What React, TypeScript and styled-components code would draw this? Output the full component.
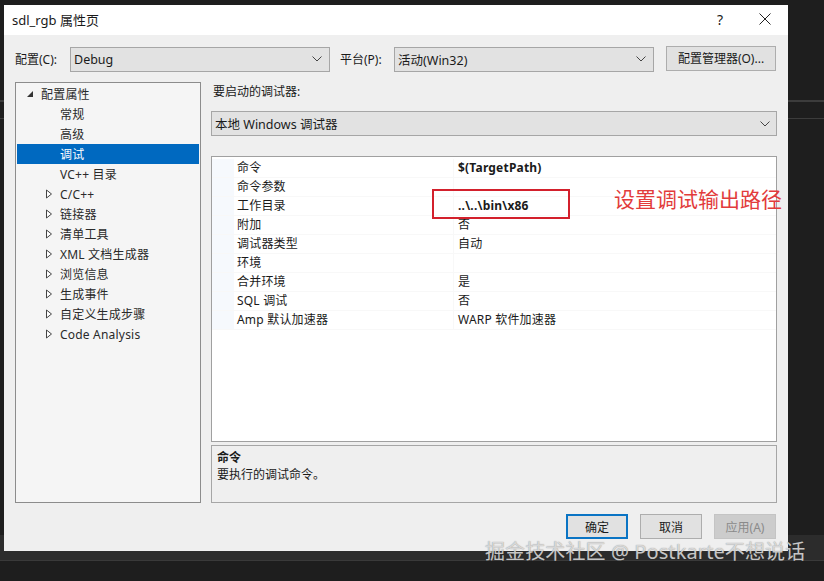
import React from "react";
import styled, { createGlobalStyle } from "styled-components";

const GlobalStyle = createGlobalStyle`
  html, body {
    margin: 0;
    padding: 0;
    background: #1e1e1e;
  }
  body {
    font-family: "Noto Sans", "Noto Sans CJK SC", sans-serif;
    font-size: 12px;
    color: #1a1a1a;
  }
`;

const Page = styled.div`
  position: relative;
  width: 824px;
  height: 581px;
  overflow: hidden;
  padding: 5px 36px 30px 4px;
  box-sizing: border-box;
  background:
    linear-gradient(#3c3c3c, #3c3c3c) 0 100px / 100% 2px no-repeat,
    linear-gradient(#3c3c3c, #3c3c3c) 0 118px / 100% 1px no-repeat,
    linear-gradient(#2c2c2c, #2c2c2c) 0 535px / 100% 25px no-repeat,
    linear-gradient(#3a3a3a, #3a3a3a) 0 560px / 100% 1px no-repeat,
    #1e1e1e;
`;

const Dialog = styled.div`
  width: 784px;
  height: 546px;
  background: #efefef;
  display: flex;
  flex-direction: column;
`;

const TitleBar = styled.div`
  height: 30px;
  flex: none;
  background: #fff;
  display: flex;
  align-items: center;
  padding: 0 17px 0 8px;
  font-size: 13px;
`;

const Title = styled.div`
  flex: 1;
  margin-top: -1px;
`;

const HelpMark = styled.div`
  width: 18px;
  margin-right: 30px;
  text-align: center;
  font-size: 14px;
  margin-top: -2px;
`;

const CloseIcon = styled.svg`
  display: block;
  width: 12px;
  height: 12px;
  margin-top: -2px;
`;

const Body = styled.div`
  flex: 1;
  display: flex;
  flex-direction: column;
  padding: 11px 11px 12px 11px;
  min-height: 0;
`;

const ConfigRow = styled.div`
  height: 26px;
  display: flex;
  align-items: center;
`;

const FieldLabel = styled.div<{ $width: number }>`
  width: ${(p) => p.$width}px;
  flex: none;
`;

const SelectBox = styled.div<{ $width?: number }>`
  ${(p) => (p.$width ? `width: ${p.$width}px;` : "")}
  height: 25px;
  flex: none;
  box-sizing: border-box;
  border: 1px solid #a6a6a6;
  background: #e2e2e2;
  display: flex;
  align-items: center;
  justify-content: space-between;
  padding: 0 7px 0 3px;
  font-size: 12.5px;
`;

const Chevron = styled.svg`
  width: 10px;
  height: 6px;
  display: block;
`;

const PlatformLabel = styled(FieldLabel)`
  margin-left: 10px;
`;

const ManagerButton = styled.button`
  width: 110px;
  height: 25px;
  margin: -2px 0 0 12px;
  flex: none;
  font: inherit;
  color: inherit;
  padding: 0;
  border: 1px solid #adadad;
  background: #e1e1e1;
`;

const Columns = styled.div`
  flex: 1;
  display: flex;
  gap: 10px;
  margin-top: 10px;
  min-height: 0;
`;

const TreePanel = styled.div`
  width: 186px;
  flex: none;
  box-sizing: border-box;
  border: 1px solid #8c8c8c;
  background: #f5f5f5;
  padding: 1px 1px 0;
`;

const TreeRow = styled.div<{ $selected?: boolean; $depth: number }>`
  height: 20px;
  display: flex;
  align-items: center;
  box-sizing: border-box;
  padding-left: ${(p) => (p.$depth === 0 ? 9 : 28)}px;
  background: ${(p) => (p.$selected ? "#0069c0" : "transparent")};
  color: ${(p) => (p.$selected ? "#fff" : "#2a2a2a")};
`;

const Arrow = styled.svg`
  width: 8px;
  height: 10px;
  flex: none;
  display: block;
`;

const TreeLabel = styled.span<{ $offset: number }>`
  margin-left: ${(p) => p.$offset}px;
  letter-spacing: 0.2px;
`;

const RightColumn = styled.div`
  flex: 1;
  display: flex;
  flex-direction: column;
  min-width: 0;
`;

const DebuggerLabel = styled.div`
  height: 18px;
  line-height: 18px;
  margin-top: 1px;
  margin-bottom: 10px;
  padding-left: 2px;
`;

const DebuggerSelect = styled(SelectBox)`
  padding-right: 6px;
  padding-left: 3px;
`;

const Grid = styled.div`
  position: relative;
  flex: 1;
  margin-top: 20px;
  box-sizing: border-box;
  border: 1px solid #a0a0a0;
  background: #fff;
  padding-top: 2px;
`;

const PropertyRow = styled.div`
  display: grid;
  grid-template-columns: 22px 220px 1fr;
  height: 19px;
  box-sizing: border-box;
  border-bottom: 1px solid #f8f8f8;
  line-height: 18px;
`;

const Gutter = styled.div`
  background: #f6f9fd;
`;

const PropertyName = styled.div`
  padding-left: 3px;
  white-space: nowrap;
  letter-spacing: 0.2px;
  border-right: 1px solid #f8f8f8;
`;

const PropertyValue = styled.div<{ $bold?: boolean }>`
  padding-left: 4px;
  white-space: nowrap;
  letter-spacing: 0.2px;
  font-weight: ${(p) => (p.$bold ? 700 : 400)};
`;

const RedBox = styled.div`
  position: absolute;
  left: 220px;
  top: 32px;
  width: 138px;
  height: 30px;
  box-sizing: border-box;
  border: 2px solid #d3202c;
`;

const RedNote = styled.div`
  position: absolute;
  left: 402px;
  top: 28px;
  font-size: 21px;
  line-height: 28px;
  color: #e23b3b;
  white-space: nowrap;
`;

const Description = styled.div`
  height: 58px;
  flex: none;
  margin-top: 3px;
  box-sizing: border-box;
  border: 1px solid #a6a6a6;
  padding: 3px 5px;
  line-height: 18px;
`;

const DescriptionTitle = styled.div`
  font-weight: 700;
  line-height: 17px;
`;

const ButtonRow = styled.div`
  display: flex;
  justify-content: flex-end;
  gap: 12px;
  margin: 11px 1px 0 0;
`;

const DialogButton = styled.button<{ $primary?: boolean }>`
  width: 62px;
  height: 25px;
  padding: 0;
  font: inherit;
  box-sizing: border-box;
  color: ${(p) => (p.disabled ? "#8a8a8a" : "#1a1a1a")};
  background: ${(p) => (p.disabled ? "#cccccc" : "#e1e1e1")};
  border: ${(p) =>
    p.$primary ? "2px solid #0a74c4" : `1px solid ${p.disabled ? "#c4c4c4" : "#adadad"}`};
`;

const Watermark = styled.div`
  position: absolute;
  left: 485px;
  top: 539px;
  font-size: 20px;
  line-height: 26px;
  letter-spacing: 0.1px;
  color: rgba(232, 232, 232, 0.82);
  white-space: nowrap;
  text-shadow: 0 0 1px rgba(60, 60, 60, 0.6);
`;

const treeItems = [
  { label: "配置属性", depth: 0, arrow: "open" },
  { label: "常规", depth: 1 },
  { label: "高级", depth: 1 },
  { label: "调试", depth: 1, selected: true },
  { label: "VC++ 目录", depth: 1 },
  { label: "C/C++", depth: 1, arrow: "closed" },
  { label: "链接器", depth: 1, arrow: "closed" },
  { label: "清单工具", depth: 1, arrow: "closed" },
  { label: "XML 文档生成器", depth: 1, arrow: "closed" },
  { label: "浏览信息", depth: 1, arrow: "closed" },
  { label: "生成事件", depth: 1, arrow: "closed" },
  { label: "自定义生成步骤", depth: 1, arrow: "closed" },
  { label: "Code Analysis", depth: 1, arrow: "closed" },
];

const properties = [
  { name: "命令", value: "$(TargetPath)", bold: true },
  { name: "命令参数", value: "" },
  { name: "工作目录", value: "..\\..\\bin\\x86", bold: true },
  { name: "附加", value: "否" },
  { name: "调试器类型", value: "自动" },
  { name: "环境", value: "" },
  { name: "合并环境", value: "是" },
  { name: "SQL 调试", value: "否" },
  { name: "Amp 默认加速器", value: "WARP 软件加速器" },
];

const DownChevron = () => (
  <Chevron viewBox="0 0 10 6">
    <path d="M0.5 0.5 L5 5 L9.5 0.5" fill="none" stroke="#444" strokeWidth="1" />
  </Chevron>
);

const App = () => {
  return (
    <Page>
      <GlobalStyle />
      <Dialog>
        <TitleBar>
          <Title>sdl_rgb 属性页</Title>
          <HelpMark>?</HelpMark>
          <CloseIcon viewBox="0 0 12 12">
            <path d="M0.5 0.5 L11.5 11.5 M11.5 0.5 L0.5 11.5" stroke="#222" strokeWidth="1" />
          </CloseIcon>
        </TitleBar>
        <Body>
          <ConfigRow>
            <FieldLabel $width={55}>配置(C):</FieldLabel>
            <SelectBox $width={260}>
              Debug
              <DownChevron />
            </SelectBox>
            <PlatformLabel $width={54}>平台(P):</PlatformLabel>
            <SelectBox $width={260}>
              活动(Win32)
              <DownChevron />
            </SelectBox>
            <ManagerButton>配置管理器(O)...</ManagerButton>
          </ConfigRow>
          <Columns>
            <TreePanel>
              {treeItems.map((item) => (
                <TreeRow key={item.label} $selected={item.selected} $depth={item.depth}>
                  {item.arrow === "open" && (
                    <Arrow viewBox="0 0 8 10">
                      <path d="M7 2 L7 8 L1 8 Z" fill="#333" />
                    </Arrow>
                  )}
                  {item.arrow === "closed" && (
                    <Arrow viewBox="0 0 8 10">
                      <path d="M1.5 1 L6.5 5 L1.5 9 Z" fill="#fff" stroke="#444" strokeWidth="1" />
                    </Arrow>
                  )}
                  <TreeLabel $offset={item.arrow === "open" ? 7 : item.arrow === "closed" ? 7 : 15}>
                    {item.label}
                  </TreeLabel>
                </TreeRow>
              ))}
            </TreePanel>
            <RightColumn>
              <DebuggerLabel>要启动的调试器:</DebuggerLabel>
              <DebuggerSelect>
                本地 Windows 调试器
                <DownChevron />
              </DebuggerSelect>
              <Grid>
                {properties.map((prop) => (
                  <PropertyRow key={prop.name}>
                    <Gutter />
                    <PropertyName>{prop.name}</PropertyName>
                    <PropertyValue $bold={prop.bold}>{prop.value}</PropertyValue>
                  </PropertyRow>
                ))}
                <RedBox />
                <RedNote>设置调试输出路径</RedNote>
              </Grid>
              <Description>
                <DescriptionTitle>命令</DescriptionTitle>
                要执行的调试命令。
              </Description>
            </RightColumn>
          </Columns>
          <ButtonRow>
            <DialogButton $primary>确定</DialogButton>
            <DialogButton>取消</DialogButton>
            <DialogButton disabled>应用(A)</DialogButton>
          </ButtonRow>
        </Body>
      </Dialog>
      <Watermark>掘金技术社区 @ Postkarte不想说话</Watermark>
    </Page>
  );
};

export default App;
